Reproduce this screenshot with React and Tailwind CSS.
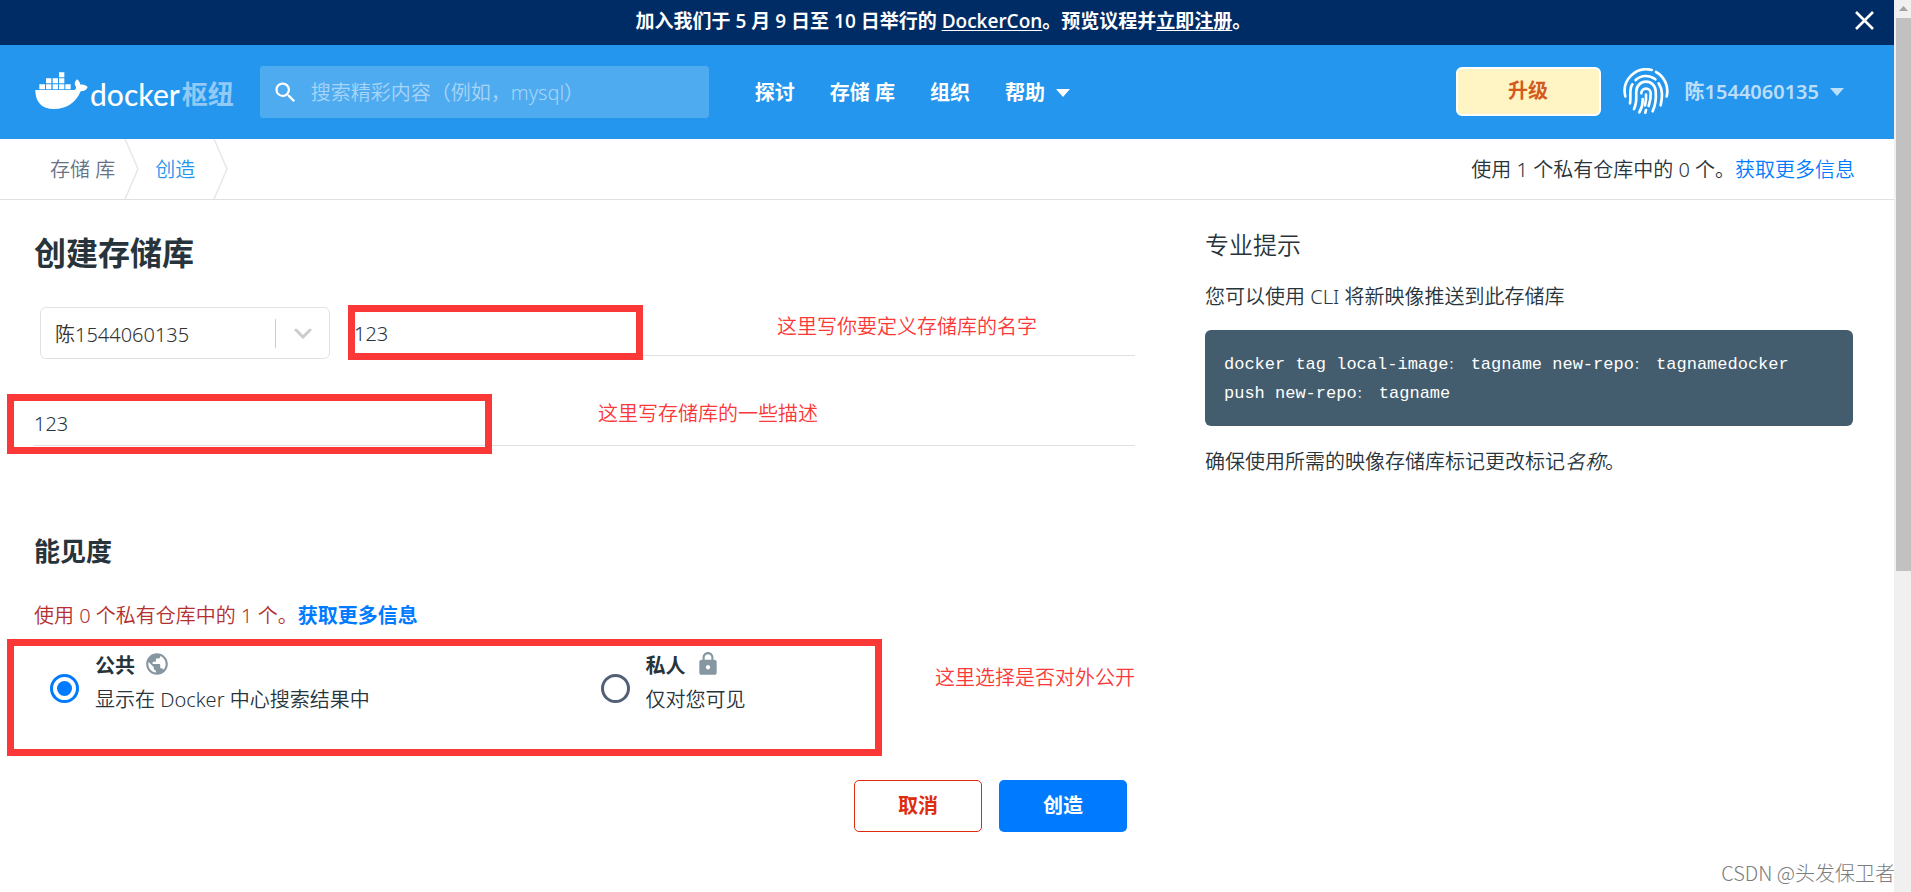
import { MdLock, MdPublic, MdSearch } from "react-icons/md";

function Whale() {
  return (
    <svg viewBox="0 0 159 111" className="h-[37px] w-[53px] shrink-0" fill="currentColor" aria-hidden="true">
      <path d="M72 1h16v15H72zM33 19h16v15H33zM53 19h16v15H53zM72 19h16v15H72zM13 37h17v15H13zM33 37h16v15H33zM53 37h16v15H53zM72 37h16v15H72zM91 37h16v15H91z" />
      <path d="M1 54H116C122 54 124 50 123 45C117 38 118 29 126 22C132 26 135 32 136 38C144 36 153 39 158 45C155 54 147 58 137 58C122 94 94 111 57 111C20 111 1 90 1 54Z" />
    </svg>
  );
}

function Fingerprint() {
  return (
    <svg
      viewBox="0 0 138 138"
      className="size-[46px] shrink-0"
      fill="none"
      stroke="currentColor"
      strokeWidth="8"
      strokeLinecap="round"
      aria-hidden="true"
    >
      <path d="M7 85A65 65 0 0 1 86 6" />
      <path d="M99 12A65 65 0 0 1 131 85" />
      <path d="M38 36A45 45 0 0 1 97 34" />
      <path d="M28 49C17 66 25 82 21 106" />
      <path d="M107 46C120 66 118 86 113 112" />
      <path d="M33 123C44 100 38 84 40 70A29 29 0 0 1 98 70C100 92 97 112 89 130" />
      <path d="M49 133C57 118 60 106 59 93" />
      <path d="M55 76A14 14 0 0 1 83 76C84 90 81 102 77 114" />
      <path d="M69 80C70 92 68 104 66 112" />
      <path d="M69 126L67 134" />
    </svg>
  );
}

function Caret() {
  return (
    <svg viewBox="0 0 14 8" className="h-2 w-[14px] shrink-0" fill="currentColor" aria-hidden="true">
      <path d="M0 0h14L7 8z" />
    </svg>
  );
}

function Crumb() {
  return (
    <svg viewBox="0 0 15 60" className="h-[60px] w-[15px] shrink-0" fill="none" stroke="#e6e7e8" strokeWidth="1.5" aria-hidden="true">
      <path d="M1 0L14 30L1 60" />
    </svg>
  );
}

function Banner() {
  return (
    <div className="flex h-[45px] items-center bg-[#002c66] pr-5 pb-1 pl-8 text-white">
      <p className="flex-1 text-center font-['Open_Sans','Noto_Sans_CJK_SC',sans-serif] text-[19px] leading-7 font-semibold">
        加入我们于 5 月 9 日至 10 日举行的{" "}
        <a href="#dockercon" className="underline underline-offset-2">
          DockerCon
        </a>
        。预览议程并<a href="#register" className="underline underline-offset-2">立即注册</a>。
      </p>
      <button type="button" aria-label="关闭">
        <svg viewBox="0 0 19 19" className="size-[19px]" stroke="currentColor" strokeWidth="2.6" aria-hidden="true">
          <path d="M1 1L18 18M18 1L1 18" />
        </svg>
      </button>
    </div>
  );
}

function Header() {
  return (
    <header className="flex h-[94px] items-center bg-[#2496ed] pr-[50px] pl-[35px] text-white">
      <a href="#home" className="flex items-center gap-[2px] pb-1">
        <Whale />
        <span className="flex items-center gap-[2px] pt-2">
          <span className="font-['Lato',sans-serif] text-[30px] leading-8 font-medium">docker</span>
          <span className="text-[26px] leading-8 font-bold text-white/50">枢纽</span>
        </span>
      </a>
      <label className="ml-[26px] flex h-[52px] w-[449px] items-center gap-3 rounded-[3px] bg-white/20 pl-3">
        <MdSearch className="size-[27px] shrink-0" />
        <input
          type="search"
          aria-label="搜索"
          placeholder="搜索精彩内容（例如，mysql）"
          className="min-w-0 flex-1 bg-transparent pt-[2px] text-xl outline-none placeholder:text-white/50"
        />
      </label>
      <nav className="ml-[46px] flex items-center gap-[35px] pt-[2px] text-xl font-bold">
        <a href="#explore">探讨</a>
        <a href="#repositories">存储 库</a>
        <a href="#organizations">组织</a>
        <button type="button" className="flex items-center gap-[11px]">
          帮助
          <Caret />
        </button>
      </nav>
      <div className="ml-auto flex items-center pb-[2px]">
        <button type="button" className="h-[49px] w-[145px] rounded-md border-2 border-white bg-[#fff4c4] text-xl font-bold text-[#d35b20]">
          升级
        </button>
        <span className="ml-[22px] flex">
          <Fingerprint />
        </span>
        <button type="button" className="ml-4 flex items-center gap-[11px] pt-[2px] text-xl font-semibold text-white/70">
          陈1544060135
          <Caret />
        </button>
      </div>
    </header>
  );
}

function Breadcrumbs() {
  return (
    <div className="flex h-[61px] items-center justify-between border-b border-[#e0e0e0] pr-[39px] pl-[50px] text-xl">
      <nav aria-label="路径" className="flex items-center">
        <a href="#repositories" className="mr-[9px] pt-[2px] text-[#677285]">存储 库</a>
        <Crumb />
        <a href="#create" className="mr-[18px] ml-4 pt-[2px] text-[#2496ed]">创造</a>
        <Crumb />
      </nav>
      <p className="pt-[2px]">
        使用 1 个私有仓库中的 0 个。
        <a href="#more" className="text-[#007bff]">获取更多信息</a>
      </p>
    </div>
  );
}

function Visibility({ id, title, text, icon, checked }) {
  return (
    <div className="flex gap-4 pl-4">
      <input
        type="radio"
        id={id}
        name="visibility"
        defaultChecked={checked}
        className="mb-[14px] size-[29px] shrink-0 appearance-none self-end rounded-full border-3 border-[#525f75] bg-clip-content p-1 checked:border-[#007bff] checked:bg-[#007bff]"
      />
      <label htmlFor={id} className="text-xl leading-[34px]">
        <span className="flex gap-[9px] font-bold">
          {title}
          {icon}
        </span>
        {text}
      </label>
    </div>
  );
}

const NOTE = "pointer-events-none absolute text-xl leading-[30px] whitespace-nowrap text-[#fb3838]";
const FRAME = "pointer-events-none absolute border-7 border-[#fb3838]";

function CreateForm() {
  return (
    <form className="pt-[33px]" onSubmit={(event) => event.preventDefault()}>
      <h1 className="text-[32px] leading-10 font-bold">创建存储库</h1>

      <div className="relative mt-[34px] flex gap-6 pl-[6px]">
        <div className="relative h-[52px] w-[290px] shrink-0">
          <select
            aria-label="命名空间"
            className="size-full appearance-none rounded-md border border-[#e1e2e6] bg-white pt-1 pl-[14px] text-xl text-[#333]"
          >
            <option>陈1544060135</option>
          </select>
          <div className="pointer-events-none absolute inset-y-3 right-[18px] flex items-center gap-[18px] text-[#ccc]">
            <span className="h-[29px] w-px bg-[#ccc]" />
            <svg viewBox="0 0 18 11" className="h-[11px] w-[18px]" fill="none" stroke="currentColor" strokeWidth="3" strokeLinecap="round" aria-hidden="true">
              <path d="M2 2L9 9L16 2" />
            </svg>
          </div>
        </div>
        <input
          type="text"
          aria-label="名称"
          defaultValue="123"
          className="h-[49px] min-w-0 flex-1 border-b border-[#e0e0e0] pt-1 text-xl outline-none"
        />
        <div className={`${FRAME} -top-[2px] left-[314px] h-[55px] w-[295px]`} />
        <span className={`${NOTE} top-[5px] left-[743px]`}>这里写你要定义存储库的名字</span>
      </div>

      <div className="relative mt-[43px] flex">
        <input
          type="text"
          aria-label="描述"
          defaultValue="123"
          className="h-11 min-w-0 flex-1 border-b border-[#e0e0e0] text-xl outline-none"
        />
        <div className={`${FRAME} -top-2 -left-[27px] h-[60px] w-[485px]`} />
        <span className={`${NOTE} -top-[3px] left-[564px]`}>这里写存储库的一些描述</span>
      </div>

      <h2 className="mt-[89px] text-[26px] leading-8 font-bold">能见度</h2>
      <p className="mt-[33px] text-xl leading-8 text-[#b3302f]">
        使用 0 个私有仓库中的 1 个。
        <a href="#more" className="font-bold text-[#007bff]">获取更多信息</a>
      </p>

      <div className="relative mt-[17px] grid grid-cols-2">
        <Visibility
          id="public"
          title="公共"
          text="显示在 Docker 中心搜索结果中"
          icon={<MdPublic className="mt-[2px] size-[26px] text-[#8697a2]" />}
          checked
        />
        <Visibility
          id="private"
          title="私人"
          text="仅对您可见"
          icon={<MdLock className="mt-[2px] size-[26px] text-[#8697a2]" />}
        />
        <div className={`${FRAME} -top-[10px] -left-[27px] h-[117px] w-[875px]`} />
        <span className={`${NOTE} top-[14px] left-[901px]`}>这里选择是否对外公开</span>
      </div>

      <div className="mt-[63px] flex justify-end gap-[17px] pr-2 text-xl font-bold">
        <button type="button" className="h-[52px] w-32 rounded-[5px] border border-[#dd2c0e] text-[#dd2c0e]">
          取消
        </button>
        <button type="submit" className="h-[52px] w-32 rounded-[5px] bg-[#007bff] text-white">
          创造
        </button>
      </div>
    </form>
  );
}

function Tips() {
  return (
    <aside className="pt-[29px] text-xl leading-8">
      <h3 className="text-2xl leading-8">专业提示</h3>
      <p className="mt-5">您可以使用 CLI 将新映像推送到此存储库</p>
      <pre className="mt-[17px] rounded-md bg-[#445d6e] px-[19px] pt-5 pb-[18px] font-['Liberation_Mono','Noto_Sans_CJK_SC',monospace] text-[17px] leading-[29px] font-normal whitespace-pre-wrap text-white">
        docker tag local-image<span className="text-xs">：</span> tagname new-repo<span className="text-xs">：</span> tagnamedocker{"\n"}
        push new-repo<span className="text-xs">：</span> tagname
      </pre>
      <p className="mt-5">
        确保使用所需的映像存储库标记更改标记<em>名称</em>。
      </p>
    </aside>
  );
}

export default function App() {
  return (
    <div
      lang="zh-CN"
      className="relative flex min-h-screen bg-white font-['Noto_Sans','Noto_Sans_CJK_SC',sans-serif] font-[350] text-[#27343b]"
    >
      <div className="min-w-0 flex-1">
        <Banner />
        <Header />
        <Breadcrumbs />
        <main className="grid grid-cols-[1101fr_648fr] gap-[70px] pr-[41px] pl-[34px]">
          <CreateForm />
          <Tips />
        </main>
      </div>

      <div className="flex w-[17px] flex-col bg-[#f0f0f0] pl-[2px]" aria-hidden="true">
        <svg viewBox="0 0 15 18" className="h-[18px] w-[15px]" fill="#a3a3a3">
          <path d="M3 11h9L7.500 6z" />
        </svg>
        <div className="h-[62%] bg-[#c1c1c1]" />
      </div>

      <span className="pointer-events-none absolute right-4 bottom-[5px] font-['Noto_Sans_CJK_SC',sans-serif] text-xl leading-7 font-light text-[#7c7c7c]">
        CSDN @头发保卫者
      </span>
    </div>
  );
}
